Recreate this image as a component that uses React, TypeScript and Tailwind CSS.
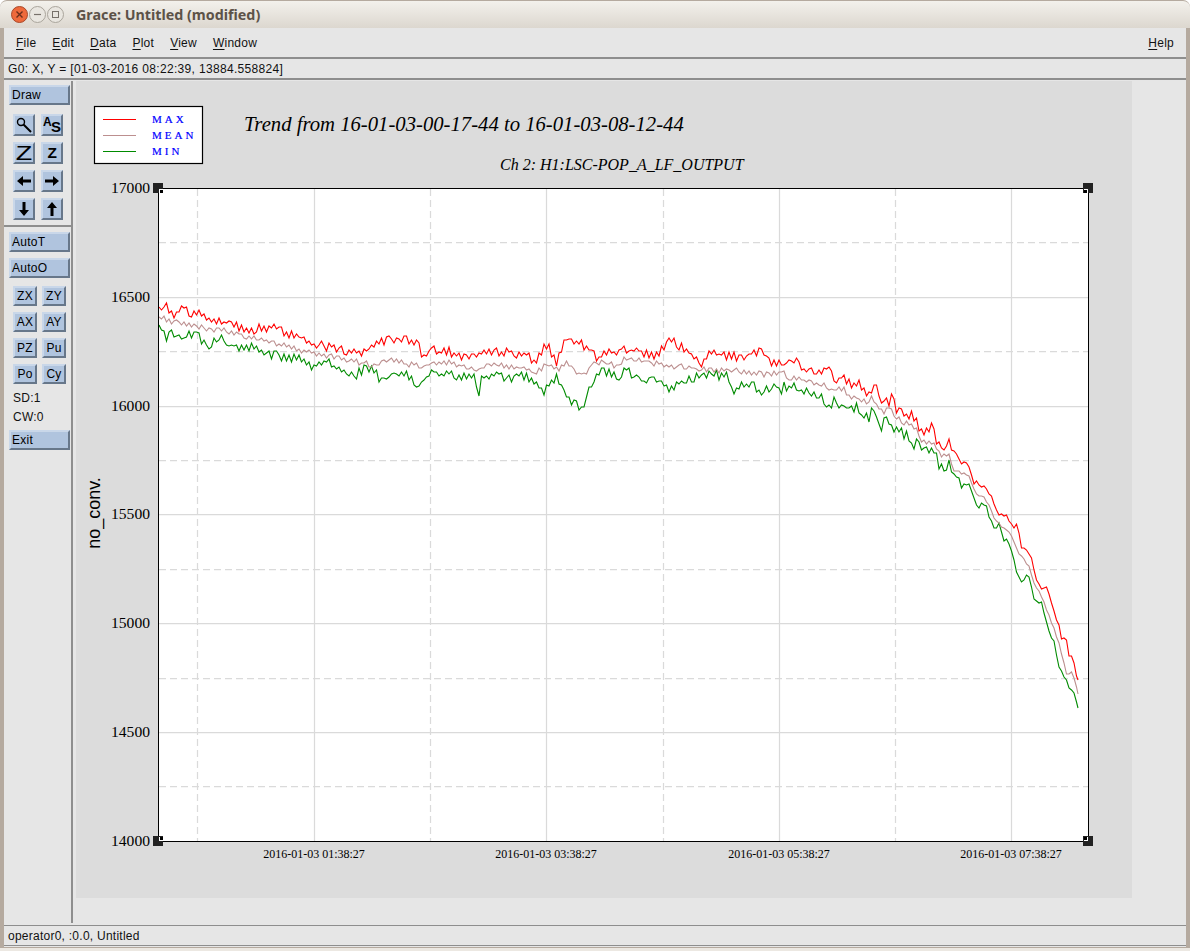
import type { ReactNode } from "react";

type Pt = [number, number];

const maxPts: Pt[] = [[159,310],[165,303],[172,316],[183,307],[190,313],[200,315],[217,320],[233,325],[250,330],[275,327],[283,333],[303,340],[313,345],[337,348],[360,353],[370,347],[387,340],[400,338],[417,343],[425,360],[430,350],[443,353],[450,352],[467,357],[492,352],[525,353],[537,363],[545,343],[557,362],[565,338],[583,345],[598,358],[623,348],[640,353],[657,355],[669,340],[683,348],[703,363],[708,352],[737,357],[763,352],[770,365],[783,363],[798,362],[805,373],[812,368],[817,375],[825,367],[837,382],[843,375],[852,388],[858,383],[868,393],[877,387],[882,407],[885,397],[888,405],[893,395],[897,413],[900,407],[905,418],[913,415],[923,435],[933,425],[937,442],[945,452],[948,436],[953,453],[957,454],[961,466],[964,461],[969,465],[973,482],[987,488],[994,503],[1000,517],[1007,515],[1013,528],[1018,523],[1021,549],[1030,552],[1033,568],[1040,588],[1048,588],[1055,617],[1058,622],[1061,637],[1067,640],[1069,656],[1073,658],[1075,669],[1078,680]];

const meanPts: Pt[] = [[159,320],[162,316],[173,323],[183,323],[200,328],[233,332],[250,338],[270,342],[290,347],[313,353],[337,358],[373,365],[393,360],[423,368],[433,363],[450,363],[478,370],[490,364],[517,367],[537,372],[547,363],[557,370],[567,363],[577,375],[587,375],[590,363],[607,362],[617,367],[625,358],[663,365],[707,370],[737,370],[750,372],[770,375],[783,372],[787,380],[793,377],[807,380],[815,386],[823,383],[828,389],[843,388],[848,395],[867,402],[872,397],[883,413],[888,407],[897,418],[917,430],[923,442],[933,443],[943,458],[948,452],[953,470],[968,475],[977,495],[985,497],[994,517],[1000,525],[1010,532],[1018,552],[1030,568],[1035,587],[1042,597],[1057,637],[1067,675],[1073,672],[1078,694]];

const minPts: Pt[] = [[159,325],[167,337],[170,330],[183,337],[193,334],[210,345],[220,338],[230,345],[250,347],[263,352],[283,357],[307,361],[313,367],[327,360],[353,377],[367,367],[383,380],[397,373],[407,375],[418,388],[430,373],[447,375],[475,377],[479,392],[482,377],[500,373],[510,380],[517,375],[533,380],[543,393],[557,375],[565,393],[582,412],[588,390],[600,370],[620,377],[625,368],[643,382],[663,377],[667,392],[683,383],[707,373],[727,377],[733,391],[742,382],[745,392],[750,380],[760,393],[770,389],[775,383],[782,392],[783,382],[787,392],[792,385],[800,392],[815,392],[825,400],[829,409],[835,397],[838,405],[848,408],[858,407],[862,418],[863,412],[869,421],[872,405],[882,429],[886,416],[893,430],[902,429],[903,437],[908,435],[912,447],[918,443],[924,452],[930,448],[935,453],[938,463],[946,473],[948,463],[953,475],[958,477],[962,488],[967,484],[972,490],[977,509],[982,502],[986,505],[992,525],[996,530],[1000,523],[1002,538],[1010,543],[1018,578],[1024,582],[1027,575],[1030,578],[1035,602],[1042,604],[1052,640],[1054,642],[1058,665],[1067,680],[1069,690],[1073,687],[1078,708]];

// small seeded generator so the trace looks the same on every load
function makeRandom(seed: number) {
  let s = seed;
  return () => {
    s = (s + 0x6d2b79f5) | 0;
    let t = Math.imul(s ^ (s >>> 15), 1 | s);
    t = (t + Math.imul(t ^ (t >>> 7), 61 | t)) ^ t;
    return ((t ^ (t >>> 14)) >>> 0) / 4294967296;
  };
}

function trace(pts: Pt[], amp: number, seed: number) {
  const rand = makeRandom(seed);
  const out: string[] = [];
  let seg = 0;
  let flip = 1;
  for (let x = 159; x <= 1078; x += 2.5) {
    while (seg < pts.length - 2 && pts[seg + 1][0] < x) seg++;
    const [x0, y0] = pts[seg];
    const [x1, y1] = pts[seg + 1];
    const base = y0 + ((y1 - y0) * (x - x0)) / (x1 - x0);
    const fade = x > 950 ? 0.45 : 1;
    // mostly alternate up and down so the line zigzags like sampled data
    flip = rand() < 0.75 ? -flip : flip;
    const y = base + flip * rand() * amp * fade;
    out.push(x.toFixed(1) + "," + Math.round(y));
  }
  out.push(pts[pts.length - 1].join(","));
  return out.join(" ");
}

const serif = { fontFamily: '"Liberation Serif", serif' };

const majorY = [297, 406, 514, 623, 732];
const minorY = [242, 351, 460, 569, 678, 786];
const majorX = [314, 546, 779, 1011];
const minorX = [197, 430, 663, 895];
const yTicks: [string, number][] = [["17000",188],["16500",297],["16000",406],["15500",514],["15000",623],["14500",732],["14000",841]];
const xTicks: [string, number][] = [["2016-01-03 01:38:27",314],["2016-01-03 03:38:27",546],["2016-01-03 05:38:27",779],["2016-01-03 07:38:27",1011]];
const legend: [string, string, number][] = [["MAX","#ff0000",119],["MEAN","#bc8f8f",135],["MIN","#008b00",151]];

function Handle({ x, y, dx, dy }: { x: number; y: number; dx: number; dy: number }) {
  return (
    <g shapeRendering="crispEdges">
      <rect x={x - 5} y={y - 5} width={10} height={10} fill="#222222" />
      <rect x={dx > 0 ? x + 1 : x - 4} y={dy > 0 ? y + 1 : y - 4} width={4} height={4} fill="#ffffff" />
      <rect x={dx > 0 ? x + 2 : x - 4} y={dy > 0 ? y + 2 : y - 4} width={3} height={3} fill="#000000" />
    </g>
  );
}

function Plot() {
  return (
    <svg width={1056} height={817} viewBox="76 81 1056 817" className="block tracking-normal">
      <rect x={94.5} y={106.5} width={108} height={57} fill="#ffffff" stroke="#000000" strokeWidth={1.2} />
      {legend.map(([name, color, y]) => (
        <g key={name}>
          <line x1={103} x2={136} y1={y} y2={y} stroke={color} strokeWidth={1} shapeRendering="crispEdges" />
          <text x={152} y={y + 4} fontSize={11} letterSpacing={3} fill="#0000ff" stroke="#0000ff" strokeWidth={0.2} style={serif}>{name}</text>
        </g>
      ))}
      <text x={244} y={131} fontSize={20.7} fontStyle="italic" fill="#000000" style={serif}>Trend from 16-01-03-00-17-44 to 16-01-03-08-12-44</text>
      <text x={500} y={170} fontSize={16} fontStyle="italic" fill="#000000" style={serif}>Ch 2: H1:LSC-POP_A_LF_OUTPUT</text>
      <rect x={158} y={188} width={930} height={653} fill="#ffffff" />
      <g strokeWidth={1.25} stroke="#dadada">
        {majorY.map((y) => <line key={y} x1={159} x2={1088} y1={y + 0.5} y2={y + 0.5} />)}
        {minorY.map((y) => <line key={y} x1={159} x2={1088} y1={y + 0.5} y2={y + 0.5} strokeDasharray="7 4" />)}
        {majorX.map((x) => <line key={x} x1={x + 0.5} x2={x + 0.5} y1={189} y2={841} />)}
        {minorX.map((x) => <line key={x} x1={x + 0.5} x2={x + 0.5} y1={189} y2={841} strokeDasharray="7 4" />)}
      </g>
      <polyline points={trace(maxPts, 5, 11)} fill="none" stroke="#ff0000" strokeWidth={1.1} />
      <polyline points={trace(minPts, 5, 23)} fill="none" stroke="#008b00" strokeWidth={1.1} />
      <polyline points={trace(meanPts, 3, 37)} fill="none" stroke="#bc8f8f" strokeWidth={1.1} />
      <rect x={158.5} y={188.5} width={930} height={653} fill="none" stroke="#000000" strokeWidth={1.2} shapeRendering="crispEdges" />
      <Handle x={158} y={188} dx={1} dy={1} />
      <Handle x={1088} y={188} dx={-1} dy={1} />
      <Handle x={158} y={841} dx={1} dy={-1} />
      <Handle x={1088} y={841} dx={-1} dy={-1} />
      {yTicks.map(([label, y]) => (
        <text key={label} x={150} y={y + 5} fontSize={15.6} textAnchor="end" fill="#000000" style={serif}>{label}</text>
      ))}
      {xTicks.map(([label, x]) => (
        <text key={label} x={x} y={858} fontSize={12} textAnchor="middle" fill="#000000" style={serif}>{label}</text>
      ))}
      <text transform="translate(100 513) rotate(-90)" textAnchor="middle" fontSize={18} fill="#000000" style={{ fontFamily: '"Liberation Sans", sans-serif' }}>no_conv.</text>
    </svg>
  );
}

const bevel = "border-2 border-t-[#c9d7e9] border-l-[#c9d7e9] border-r-[#67778a] border-b-[#67778a] bg-[#b0c4de]";

function Btn({ children, className }: { children: ReactNode; className: string }) {
  return <div className={"flex items-center box-border text-black " + bevel + " " + className}>{children}</div>;
}

function Arrow({ rotate }: { rotate: number }) {
  return (
    <svg width={16} height={16} viewBox="0 0 16 16" style={{ transform: "rotate(" + rotate + "deg)" }}>
      <path d="M1 8 L7 3 V6.5 H15 V9.5 H7 V13 Z" fill="#000000" />
    </svg>
  );
}

function MenuItem({ first, rest }: { first: string; rest: string }) {
  return (
    <span>
      <span className="underline underline-offset-2">{first}</span>
      {rest}
    </span>
  );
}

const iconBtn = "justify-center w-[22px] h-[22px]";
const smallBtn = "justify-center w-[24px] h-[20px]";
const wideBtn = "w-[61px] h-[20px] ml-[5px] pl-[1px]";

function Toolbar() {
  return (
    <div className="w-[69px] shrink-0 border-r-2 border-r-[#8e8e8e] box-border pt-[4px]">
      <Btn className={wideBtn}>Draw</Btn>
      <div className="grid grid-cols-[22px_22px] gap-x-[6px] gap-y-[6px] ml-[9px] mt-[9px]">
        <Btn className={iconBtn}>
          <svg width={18} height={18} viewBox="0 0 18 18">
            <circle cx={6} cy={6} r={3.5} fill="none" stroke="#000000" strokeWidth={1.4} />
            <path d="M8.5 8.5 L16 16" stroke="#000000" strokeWidth={2} />
          </svg>
        </Btn>
        <Btn className={iconBtn}>
          <span className="relative w-[18px] h-[18px] font-bold tracking-normal">
            <span className="absolute left-0 top-0 text-[12px] leading-[12px]">A</span>
            <span className="absolute left-[8px] top-[3px] text-[15px] leading-[15px]">S</span>
          </span>
        </Btn>
        <Btn className={iconBtn}><span className="text-[20px] leading-none scale-x-[1.35]">Z</span></Btn>
        <Btn className={iconBtn}><span className="text-[14px] leading-none font-bold scale-x-[1.1]">Z</span></Btn>
        <Btn className={iconBtn}><Arrow rotate={0} /></Btn>
        <Btn className={iconBtn}><Arrow rotate={180} /></Btn>
        <Btn className={iconBtn}><Arrow rotate={270} /></Btn>
        <Btn className={iconBtn}><Arrow rotate={90} /></Btn>
      </div>
      <div className="h-[2px] mt-[5px] bg-[#8e8e8e]" />
      <Btn className={wideBtn + " mt-[5px]"}>AutoT</Btn>
      <Btn className={wideBtn + " mt-[6px]"}>AutoO</Btn>
      <div className="grid grid-cols-[24px_24px] gap-x-[5px] gap-y-[6px] ml-[9px] mt-[8px]">
        {["ZX","ZY","AX","AY","PZ","Pu","Po","Cy"].map((t) => (
          <Btn key={t} className={smallBtn}>{t}</Btn>
        ))}
      </div>
      <div className="ml-[9px] mt-[5px] leading-[19px]">SD:1</div>
      <div className="ml-[9px] leading-[19px]">CW:0</div>
      <Btn className={wideBtn + " mt-[3px]"}>Exit</Btn>
    </div>
  );
}

function TitleBar() {
  return (
    <div className="h-[28px] shrink-0 flex items-center rounded-t-[7px] border-t border-[#b5aa9f] bg-gradient-to-b from-[#f3f1ec] to-[#dcd7cf] pl-[11px] tracking-normal">
      <span className="w-[17px] h-[17px] rounded-full bg-[#ee6a3c] border border-[#a9492a] flex items-center justify-center">
        <svg width={9} height={9} viewBox="0 0 9 9"><path d="M1.5 1.5 L7.5 7.5 M7.5 1.5 L1.5 7.5" stroke="#6b2f1c" strokeWidth={1.4} /></svg>
      </span>
      <span className="w-[17px] h-[17px] ml-[1px] rounded-full bg-[#e9e6e0] border border-[#aaa59c] flex items-center justify-center">
        <svg width={9} height={9} viewBox="0 0 9 9"><path d="M1 4.5 H8" stroke="#77716a" strokeWidth={1.2} /></svg>
      </span>
      <span className="w-[17px] h-[17px] ml-[1px] rounded-full bg-[#e9e6e0] border border-[#aaa59c] flex items-center justify-center">
        <svg width={9} height={9} viewBox="0 0 9 9"><rect x={1.5} y={1.5} width={6} height={6} fill="none" stroke="#77716a" strokeWidth={1} /></svg>
      </span>
      <span className="ml-[12px] text-[14.3px] font-bold text-[#5c5248]" style={{ fontFamily: '"Noto Sans", sans-serif' }}>Grace: Untitled (modified)</span>
    </div>
  );
}

export default function App() {
  return (
    <div className="w-[1190px] h-[951px] flex flex-col bg-white overflow-hidden text-[12px] tracking-[0.25px] text-[#111111]" style={{ fontFamily: '"Liberation Sans", sans-serif' }}>
      <TitleBar />
      <div className="h-[919px] shrink-0 flex flex-col border-x-4 border-x-[#b5aa9f] bg-[#e6e6e6]">
        <div className="h-[29px] shrink-0 flex items-center justify-between pl-[12px] pr-[12px]">
          <div className="flex gap-[16px]">
            <MenuItem first="F" rest="ile" />
            <MenuItem first="E" rest="dit" />
            <MenuItem first="D" rest="ata" />
            <MenuItem first="P" rest="lot" />
            <MenuItem first="V" rest="iew" />
            <MenuItem first="W" rest="indow" />
          </div>
          <MenuItem first="H" rest="elp" />
        </div>
        <div className="h-[23px] shrink-0 flex items-center pl-[4px] tracking-[0.33px] border-y-2 border-[#8e8e8e]">
          G0: X, Y = [01-03-2016 08:22:39, 13884.558824]
        </div>
        <div className="h-[842px] shrink-0 mt-[1px] flex">
          <Toolbar />
          <div className="flex-1 ml-[3px]">
            <div className="w-[1056px] h-[817px] bg-[#dcdcdc]">
              <Plot />
            </div>
          </div>
        </div>
        <div className="h-[21px] shrink-0 mt-[2px] flex items-center pl-[4px] border-y border-[#8e8e8e]">
          operator0, :0.0, Untitled
        </div>
      </div>
      <div className="flex-1 bg-[#ece8e2] border-t border-[#b5aa9f]" />
    </div>
  );
}
